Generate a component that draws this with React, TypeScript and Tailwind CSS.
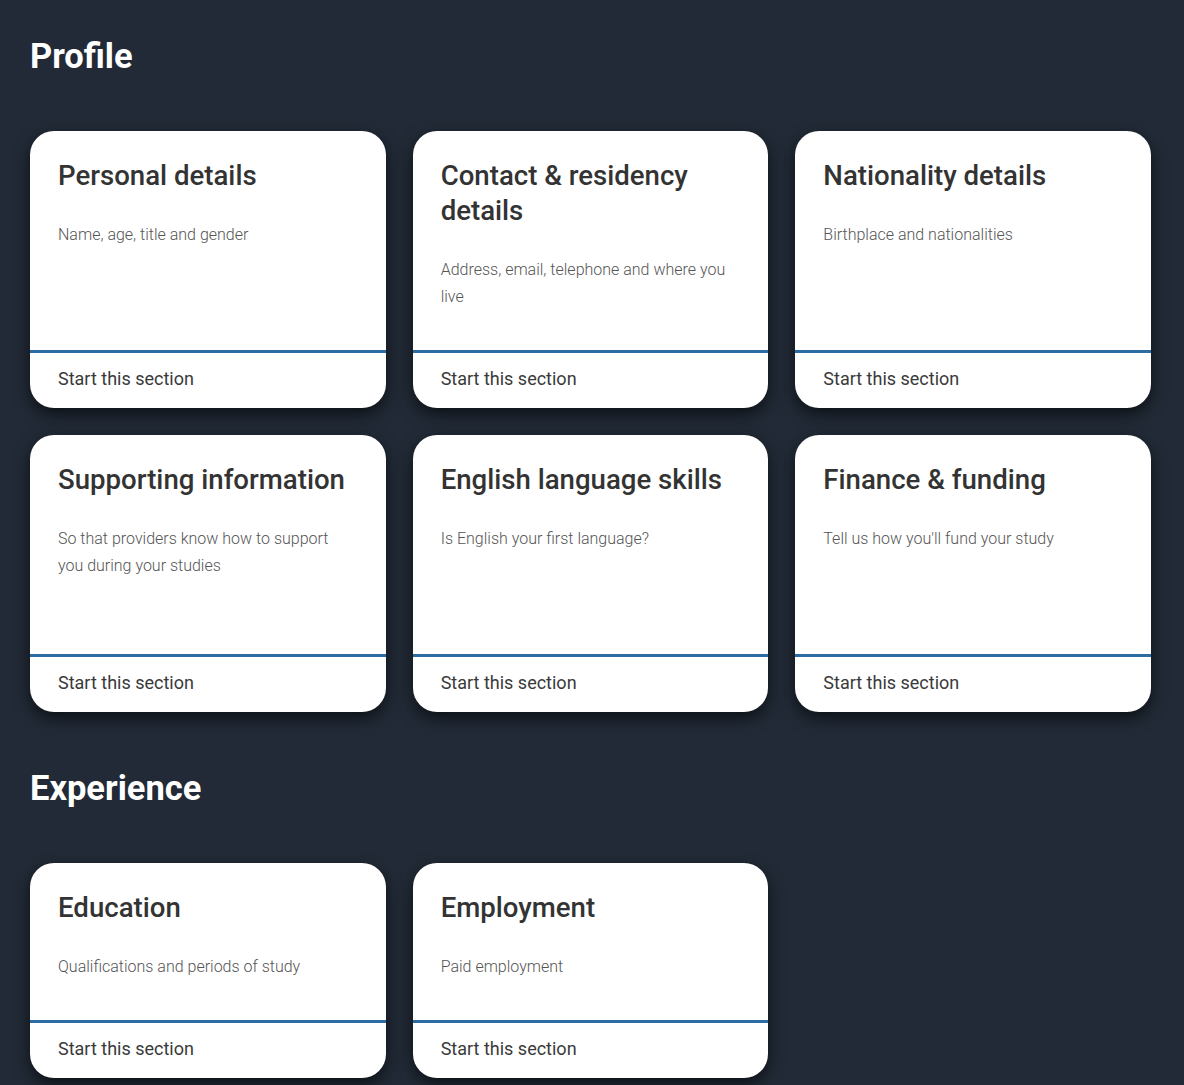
import React from "react";

type Item = { title: string; desc: string };

const profile: Item[] = [
  { title: "Personal details", desc: "Name, age, title and gender" },
  { title: "Contact & residency details", desc: "Address, email, telephone and where you live" },
  { title: "Nationality details", desc: "Birthplace and nationalities" },
  { title: "Supporting information", desc: "So that providers know how to support you during your studies" },
  { title: "English language skills", desc: "Is English your first language?" },
  { title: "Finance & funding", desc: "Tell us how you'll fund your study" },
];

const experience: Item[] = [
  { title: "Education", desc: "Qualifications and periods of study" },
  { title: "Employment", desc: "Paid employment" },
];

function Card({ item }: { item: Item }) {
  return (
    <div className="flex flex-col bg-white rounded-[24px] overflow-hidden shadow-[0_6px_16px_rgba(0,0,0,0.6)]">
      <div className="flex-1 pl-[28px] pr-[34px] pt-[27px] pb-[40px]">
        <h3 className="text-[27.6px] leading-[35px] font-medium text-[#333333] mb-[28px]">{item.title}</h3>
        <p className="text-[16px] leading-[27px] font-light text-[#555555]">{item.desc}</p>
      </div>
      <div className="border-t-[3px] border-[#2b6ca3] h-[58px] px-[28px] flex items-center">
        <span className="text-[18px] text-[#3a3a3a] pb-[5px]">Start this section</span>
      </div>
    </div>
  );
}

function Section({ title, items, first }: { title: string; items: Item[]; first?: boolean }) {
  return (
    <section className={first ? "" : "mt-[56px]"}>
      <h2 className="text-[34.5px] leading-[40px] font-bold text-white mb-[55px]">{title}</h2>
      <div className="grid grid-cols-3 auto-rows-fr gap-[27px]">
        {items.map((it) => (
          <Card key={it.title} item={it} />
        ))}
      </div>
    </section>
  );
}

export default function App() {
  return (
    <div
      className="min-h-screen bg-[#212a36] pl-[30px] pr-[33px] pt-[36px] pb-[40px]"
      style={{ fontFamily: "Roboto, 'Noto Sans', sans-serif" }}
    >
      <Section title="Profile" items={profile} first />
      <Section title="Experience" items={experience} />
    </div>
  );
}
